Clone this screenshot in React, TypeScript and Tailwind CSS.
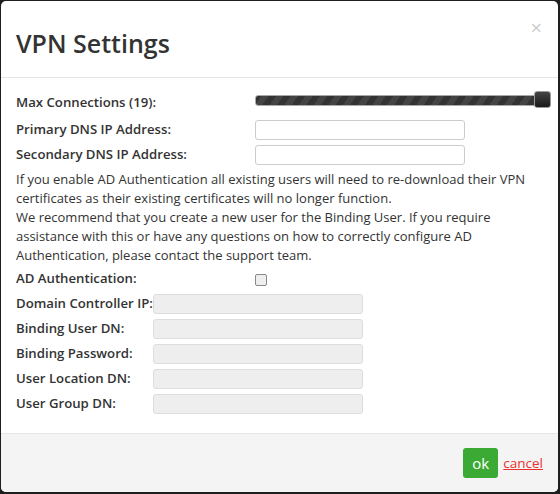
import React from "react";

const font = { fontFamily: '"Open Sans", "Noto Sans", sans-serif' };

function Label({ children, w }: { children: React.ReactNode; w?: string }) {
  return <div className={`font-semibold text-[13.2px] text-[#333] whitespace-nowrap ${w ?? ""}`}>{children}</div>;
}

export default function App() {
  const rows = ["Domain Controller IP:", "Binding User DN:", "Binding Password:", "User Location DN:", "User Group DN:"];
  return (
    <div className="w-[560px] h-[494px] bg-[#1e1e1e] pl-[1px] pt-[1px] pr-[2px] pb-[2px]" style={font}>
      <div className="w-full h-full bg-white rounded-[5px] flex flex-col overflow-hidden">
        <div className="h-[77px] shrink-0 border-b border-[#e5e5e5] flex items-center justify-between pl-[15px] pr-[16px]">
          <h4 className="text-[25px] font-semibold text-[#333] leading-none pt-[9px]">VPN Settings</h4>
          <span className="text-[#ccc] text-[20px] leading-none -mt-[22px]">×</span>
        </div>
        <div className="flex-1 px-[15px] pt-[11px] text-[13px] text-[#333]">
          <div className="flex items-center h-[28px]">
            <Label w="w-[239px]">Max Connections (19):</Label>
            <div className="relative flex-1 h-[16px] -mt-[6px] -mr-[8px]">
              <div
                className="absolute left-0 right-[2px] top-[3px] h-[11px] rounded-[3px] border border-[#aaa]"
                style={{ background: "repeating-linear-gradient(-55deg,#333 0px,#333 6px,#444 6px,#444 12px)" }}
              />
              <div className="absolute right-0 -top-[1px] w-[17px] h-[17px] rounded-[3px] border border-[#999] bg-gradient-to-b from-[#444] to-[#1a1a1a]" />
            </div>
          </div>
          <div className="flex items-center h-[25px]">
            <Label w="w-[239px]">Primary DNS IP Address:</Label>
            <input className="w-[210px] h-[20px] border border-[#ccc] rounded-[3px] bg-white" />
          </div>
          <div className="flex items-center h-[25px]">
            <Label w="w-[239px]">Secondary DNS IP Address:</Label>
            <input className="w-[210px] h-[20px] border border-[#ccc] rounded-[3px] bg-white" />
          </div>
          <p className="mt-[3px] leading-[19px] pr-[8px]">
            If you enable AD Authentication all existing users will need to re-download their VPN certificates as their existing certificates will no longer function.
            <br />
            We recommend that you create a new user for the Binding User. If you require assistance with this or have any questions on how to correctly configure AD Authentication, please contact the support team.
          </p>
          <div className="flex items-center h-[25px] mt-[1px]">
            <Label w="w-[239px]">AD Authentication:</Label>
            <div className="w-[12px] h-[12px] border border-[#888] rounded-[2px] bg-[#eee] mt-[2px]" />
          </div>
          <div className="grid grid-cols-[auto_1fr] auto-rows-[25px] items-center">
            {rows.map((r) => (
              <React.Fragment key={r}>
                <Label>{r}</Label>
                <div className="w-[210px] h-[20px] border border-[#ddd] rounded-[3px] bg-[#eee]" />
              </React.Fragment>
            ))}
          </div>
        </div>
        <div className="h-[59px] shrink-0 border-t border-[#e5e5e5] bg-[#f4f4f4] flex items-center justify-end pr-[15px] gap-[5px]">
          <button className="w-[35px] h-[30px] bg-[#3aaa35] rounded-[3px] text-white text-[15px] leading-none">ok</button>
          <a className="text-[#e8322f] underline text-[13.5px]">cancel</a>
        </div>
      </div>
    </div>
  );
}
